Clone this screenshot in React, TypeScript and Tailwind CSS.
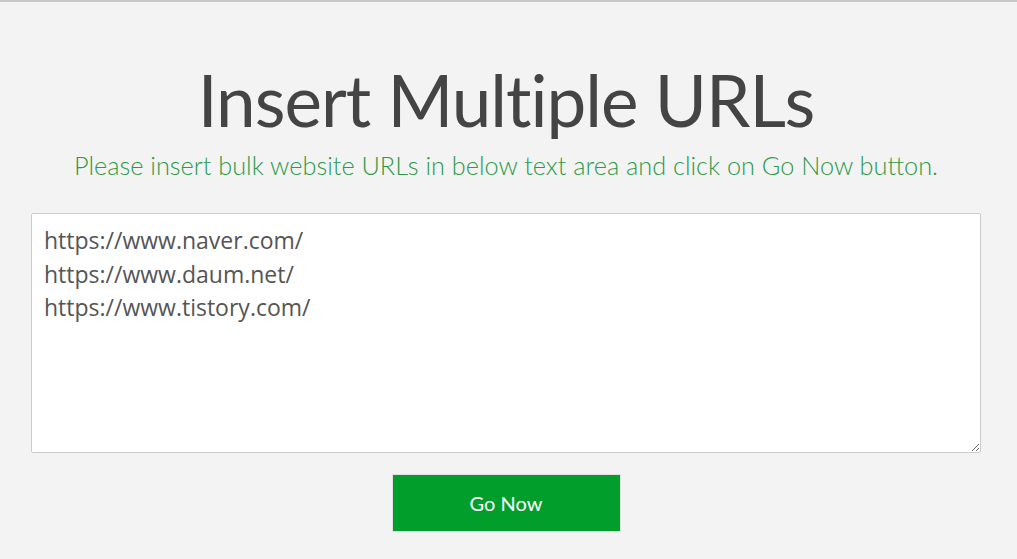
import React from 'react';

export default function App() {
  const urls = 'https://www.naver.com/\nhttps://www.daum.net/\nhttps://www.tistory.com/';

  return (
    <div className="min-h-[559px] w-full bg-[#f3f3f3] border-t-2 border-[#c9c9c9] font-['Lato',sans-serif]">
      <div className="w-[1012px] flex flex-col items-center">
        <h1 className="mt-[53px] text-[71px] leading-[90px] font-normal tracking-[-1px] text-[#444444]">
          Insert Multiple URLs
        </h1>
        <p className="mt-[5px] text-[25.3px] leading-[30px] font-light text-[#2d9a48]">
          Please insert bulk website URLs in below text area and click on Go Now button.
        </p>
        <textarea
          defaultValue={urls}
          className="mt-[33px] w-[950px] h-[240px] bg-white border border-[#cccccc] rounded-[2px] px-[12px] py-[10px] text-[23px] leading-[33.5px] text-[#555555] outline-none font-['Open_Sans','Noto_Sans',sans-serif]"
        />
        <button className="mt-[21px] w-[229px] h-[58px] bg-[#019e2c] text-white text-[20px] border border-[#e0e0e0]">
          Go Now
        </button>
      </div>
    </div>
  );
}
